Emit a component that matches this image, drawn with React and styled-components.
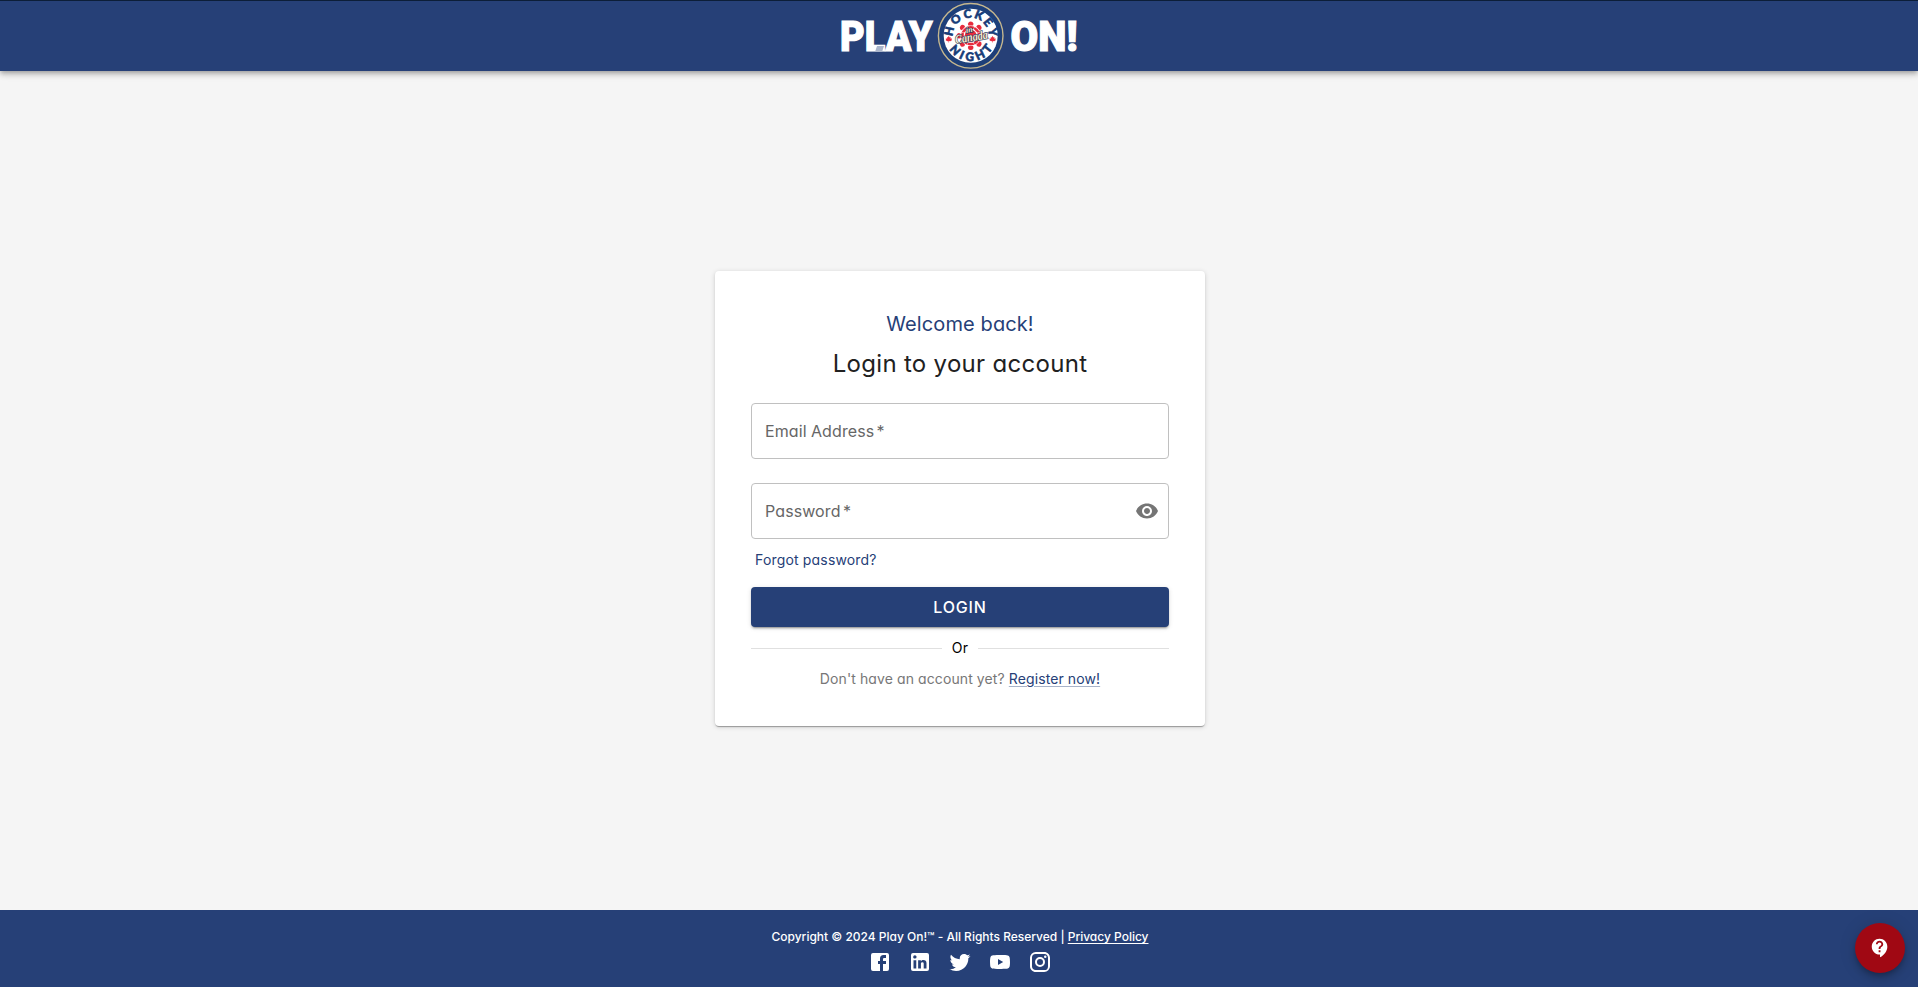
import React from 'react';
import styled, { createGlobalStyle } from 'styled-components';
import { MdVisibility, MdContactSupport } from 'react-icons/md';

const navy = '#264077';

const GlobalStyle = createGlobalStyle`
  * { box-sizing: border-box; }
  body {
    margin: 0;
    background: #f5f5f5;
    font-family: Inter, "Open Sans", sans-serif;
    font-feature-settings: "cv11";
  }
`;

const Page = styled.div`
  height: 100vh;
  display: flex;
  flex-direction: column;
`;

const Header = styled.header`
  height: 71px;
  flex: none;
  display: flex;
  justify-content: center;
  background: ${navy};
  border-top: 1px solid #0c1e38;
  box-shadow: 0 2px 4px -1px rgba(0, 0, 0, 0.2), 0 4px 5px rgba(0, 0, 0, 0.14),
    0 1px 10px rgba(0, 0, 0, 0.12);
`;

const Main = styled.main`
  flex: 1;
  display: flex;
  justify-content: center;
  align-items: flex-start;
  padding: 200px 0 0 2px;
`;

const Card = styled.form`
  width: 490px;
  height: 455px;
  padding: 37px 36px 0;
  display: flex;
  flex-direction: column;
  background: #fff;
  border-radius: 4px;
  box-shadow: 0 2px 1px -1px rgba(0, 0, 0, 0.2), 0 1px 1px rgba(0, 0, 0, 0.14),
    0 1px 5px rgba(0, 0, 0, 0.16);
`;

const Welcome = styled.h2`
  margin: 0;
  font-size: 20px;
  font-weight: 400;
  line-height: 32px;
  letter-spacing: 0.1px;
  text-align: center;
  color: ${navy};
`;

const Title = styled.h1`
  margin: 5px 0 21px;
  font-size: 24px;
  font-weight: 400;
  line-height: 37px;
  letter-spacing: 0.3px;
  text-align: center;
  color: #212121;
`;

const Field = styled.label`
  height: 56px;
  flex: none;
  margin-bottom: ${(p) => p.$gap || 0}px;
  padding: 0 9px 0 13px;
  display: flex;
  align-items: center;
  justify-content: space-between;
  border: 1px solid #c0c0c0;
  border-radius: 4px;
  font-size: 16px;
  letter-spacing: 0.1px;
  word-spacing: -0.3px;
  color: #666;
  svg { color: #757575; }
`;

const Required = styled.span`
  margin-left: -2px;
`;

const Forgot = styled.a`
  margin: 9px 0 0 4px;
  font-size: 14px;
  line-height: 24px;
  letter-spacing: 0.17px;
  color: ${navy};
`;

const LoginButton = styled.button`
  height: 40px;
  flex: none;
  margin-top: 15px;
  padding: 0;
  border: 0;
  border-radius: 4px;
  background: ${navy};
  color: #fff;
  font: 500 16px Inter, sans-serif;
  letter-spacing: 0.8px;
  box-shadow: 0 3px 1px -2px rgba(0, 0, 0, 0.2), 0 2px 2px rgba(0, 0, 0, 0.14),
    0 1px 5px rgba(0, 0, 0, 0.12);
`;

const Divider = styled.div`
  display: flex;
  align-items: center;
  gap: 10px;
  margin-top: 10px;
  height: 23px;
  font-size: 14px;
  line-height: 20px;
  letter-spacing: 0.3px;
  color: #000;
  &::before, &::after {
    content: "";
    flex: 1;
    height: 1px;
    background: #e0e0e0;
  }
`;

const DividerLabel = styled.span`
  padding-bottom: 2px;
`;

const Register = styled.p`
  margin: 7px 0 0;
  font-size: 14px;
  line-height: 24px;
  text-align: center;
  white-space: nowrap;
  letter-spacing: 0.1px;
  color: #777;
`;

const RegisterLink = styled.a`
  color: ${navy};
  text-decoration: underline;
  text-decoration-color: #a8b3c9;
  text-underline-offset: 2px;
`;

const Footer = styled.footer`
  height: 77px;
  flex: none;
  padding: 17px 0 0 2px;
  display: flex;
  flex-direction: column;
  align-items: center;
  background: ${navy};
  color: #fff;
`;

const Copyright = styled.div`
  font-size: 12px;
  font-weight: 500;
  line-height: 20px;
  letter-spacing: -0.01px;
  white-space: nowrap;
`;

const PolicyLink = styled.a`
  text-decoration: underline;
  text-underline-offset: 2px;
`;

const Socials = styled.div`
  display: flex;
  gap: 16px;
  margin-top: 3px;
  svg { display: block; width: 24px; height: 24px; fill: #fff; }
`;

const HelpButton = styled.button`
  position: fixed;
  right: 13px;
  bottom: 14px;
  width: 50px;
  height: 50px;
  padding: 0;
  display: grid;
  place-items: center;
  border: 0;
  border-radius: 50%;
  background: #a00813;
  color: #fff;
  box-shadow: 0 3px 5px -1px rgba(0, 0, 0, 0.2), 0 6px 10px rgba(0, 0, 0, 0.14),
    0 1px 18px rgba(0, 0, 0, 0.12);
`;

const LogoSvg = styled.svg`
  display: block;
  flex: none;
  margin-left: 2px;
`;

const socialPaths = [
  'M5 3h14a2 2 0 0 1 2 2v14a2 2 0 0 1-2 2H5a2 2 0 0 1-2-2V5a2 2 0 0 1 2-2m13 2h-2.5A3.5 3.5 0 0 0 12 8.5V11h-2v3h2v7h3v-7h3v-3h-3V9a1 1 0 0 1 1-1h2V5z',
  'M19 3a2 2 0 0 1 2 2v14a2 2 0 0 1-2 2H5a2 2 0 0 1-2-2V5a2 2 0 0 1 2-2h14m-.5 15.5v-5.3a3.26 3.26 0 0 0-3.26-3.26c-.85 0-1.84.52-2.32 1.3v-1.11h-2.79v8.37h2.79v-4.93c0-.77.62-1.4 1.39-1.4a1.4 1.4 0 0 1 1.4 1.4v4.93h2.79M6.88 8.56a1.68 1.68 0 0 0 1.68-1.68c0-.93-.75-1.69-1.68-1.69a1.69 1.69 0 0 0-1.69 1.69c0 .93.76 1.68 1.69 1.68m1.39 9.94v-8.37H5.5v8.37h2.77z',
  'M22.46 6c-.77.35-1.6.58-2.46.69.88-.53 1.56-1.37 1.88-2.38-.83.5-1.75.85-2.72 1.05C18.37 4.5 17.26 4 16 4c-2.35 0-4.27 1.92-4.27 4.29 0 .34.04.67.11.98C8.28 9.09 5.11 7.38 3 4.79c-.37.63-.58 1.37-.58 2.15 0 1.49.75 2.81 1.91 3.56-.71 0-1.37-.2-1.95-.5v.03c0 2.08 1.48 3.82 3.44 4.21a4.22 4.22 0 0 1-1.93.07 4.28 4.28 0 0 0 4 2.98 8.521 8.521 0 0 1-5.33 1.84c-.34 0-.68-.02-1.02-.06C3.44 20.29 5.7 21 8.12 21 16 21 20.33 14.46 20.33 8.79c0-.19 0-.37-.01-.56.84-.6 1.56-1.36 2.14-2.23z',
  'M10 15l5.19-3L10 9v6m11.56-7.83c.13.47.22 1.1.28 1.9.07.8.1 1.49.1 2.09L22 12c0 2.19-.16 3.8-.44 4.83-.25.9-.83 1.48-1.73 1.73-.47.13-1.33.22-2.65.28-1.3.07-2.49.1-3.59.1L12 19c-4.19 0-6.8-.16-7.83-.44-.9-.25-1.48-.83-1.73-1.73-.13-.47-.22-1.1-.28-1.9-.07-.8-.1-1.49-.1-2.09L2 12c0-2.19.16-3.8.44-4.83.25-.9.83-1.48 1.73-1.73.47-.13 1.33-.22 2.65-.28 1.3-.07 2.49-.1 3.59-.1L12 5c4.19 0 6.8.16 7.83.44.9.25 1.48.83 1.73 1.73z',
  'M7.8 2h8.4C19.4 2 22 4.6 22 7.8v8.4a5.8 5.8 0 0 1-5.8 5.8H7.8C4.6 22 2 19.4 2 16.2V7.8A5.8 5.8 0 0 1 7.8 2m-.2 2A3.6 3.6 0 0 0 4 7.6v8.8C4 18.39 5.61 20 7.6 20h8.8a3.6 3.6 0 0 0 3.6-3.6V7.6C20 5.61 18.39 4 16.4 4H7.6m9.65 1.5a1.25 1.25 0 0 1 1.25 1.25A1.25 1.25 0 0 1 17.25 8 1.25 1.25 0 0 1 16 6.75a1.25 1.25 0 0 1 1.25-1.25M12 7a5 5 0 0 1 5 5 5 5 0 0 1-5 5 5 5 0 0 1-5-5 5 5 0 0 1 5-5m0 2a3 3 0 0 0-3 3 3 3 0 0 0 3 3 3 3 0 0 0 3-3 3 3 0 0 0-3-3z',
];

const leaf =
  'M0-4 L1-2 L2.2-2.6 L1.9-.4 L3.6-1.2 L3.2.4 L4 .9 L1.8 2.3 L.4 2.2 L.3 4 H-.3 L-.4 2.2 L-1.8 2.3 L-4 .9 L-3.2.4 L-3.6-1.2 L-1.9-.4 L-2.2-2.6 L-1-2Z';

const wordStyle = {
  fontFamily: 'Roboto, sans-serif',
  fontWeight: 900,
  fontSize: 42.5,
  fill: '#fff',
  stroke: '#fff',
  strokeWidth: 1.2,
};

function Logo() {
  return (
    <LogoSvg width="280" height="70" viewBox="820 1 280 70">
      <text x="840" y="51" textLength="92.5" lengthAdjust="spacingAndGlyphs" {...wordStyle}>PLAY</text>
      <path d="M877 46h7l-2 6h-7z" fill="#aab5cb" />
      <text x="1010.5" y="51" textLength="67" lengthAdjust="spacingAndGlyphs" {...wordStyle}>ON!</text>
      <g transform="translate(970.7 35.8)">
        <circle r="32.3" fill="#1d3f79" stroke="#c5b78e" strokeWidth="1.4" />
        <circle r="27" fill="#fff" />
        <g fill="#e72b3d">
          <g transform="scale(1.08)">
            <circle r="5.5" />
            {[0, 45, 90, 135, 180, 225, 270, 315].map((a) => (
              <g key={a} transform={`rotate(${a})`}>
                <path d="M-3.2-8.4A9 9 0 0 1 3.2-8.4L2.5-6.4H-2.5Z" />
                <path d="M-2.6-11.2A2.8 3.2 0 0 1 2.6-11.2L2.2-9.5H-2.2Z" />
              </g>
            ))}
          </g>
          <path d={leaf} transform="translate(-21.9 3.4) scale(.85)" />
          <path d={leaf} transform="translate(21.9 3.4) scale(.85)" />
        </g>
        <defs>
          <path id="arcTop" d="M-16.9 6.1A18 18 0 1 1 16.9 6.1" />
          <path id="arcBottom" d="M-25.2 3A25.4 25.4 0 0 0 25.2 3" />
        </defs>
        <g fontFamily="Lato, sans-serif" fontWeight="900" fontSize="11.8" fill="#173c78" stroke="#173c78" strokeWidth=".6">
          <text><textPath href="#arcTop" startOffset="5.5" textLength="58" lengthAdjust="spacing">HOCKEY</textPath></text>
          <text><textPath href="#arcBottom" startOffset="11" textLength="52" lengthAdjust="spacing">NIGHT</textPath></text>
        </g>
        <g fontFamily="Liberation Serif, serif" fontStyle="italic" fontWeight="700" fill="#f8edca" stroke="#28365f" strokeWidth="1.3" paintOrder="stroke" transform="rotate(-9)">
          <text x="-4" y="-3.5" fontSize="8">in</text>
          <text x="-16" y="5.5" fontSize="12.5" textLength="33" lengthAdjust="spacingAndGlyphs">Canada</text>
        </g>
      </g>
    </LogoSvg>
  );
}

export default function App() {
  return (
    <Page>
      <GlobalStyle />
      <Header><Logo /></Header>
      <Main>
        <Card>
          <Welcome>Welcome back!</Welcome>
          <Title>Login to your account</Title>
          <Field $gap={24}><span>Email Address <Required>*</Required></span></Field>
          <Field><span>Password <Required>*</Required></span><MdVisibility size={24} /></Field>
          <Forgot>Forgot password?</Forgot>
          <LoginButton type="button">LOGIN</LoginButton>
          <Divider><DividerLabel>Or</DividerLabel></Divider>
          <Register>Don't have an account yet? <RegisterLink>Register now!</RegisterLink></Register>
        </Card>
      </Main>
      <Footer>
        <Copyright>Copyright © 2024 Play On!™ - All Rights Reserved | <PolicyLink>Privacy Policy</PolicyLink></Copyright>
        <Socials>
          {socialPaths.map((d) => (
            <svg key={d} viewBox="0 0 24 24"><path d={d} /></svg>
          ))}
        </Socials>
      </Footer>
      <HelpButton type="button"><MdContactSupport size={22} /></HelpButton>
    </Page>
  );
}
